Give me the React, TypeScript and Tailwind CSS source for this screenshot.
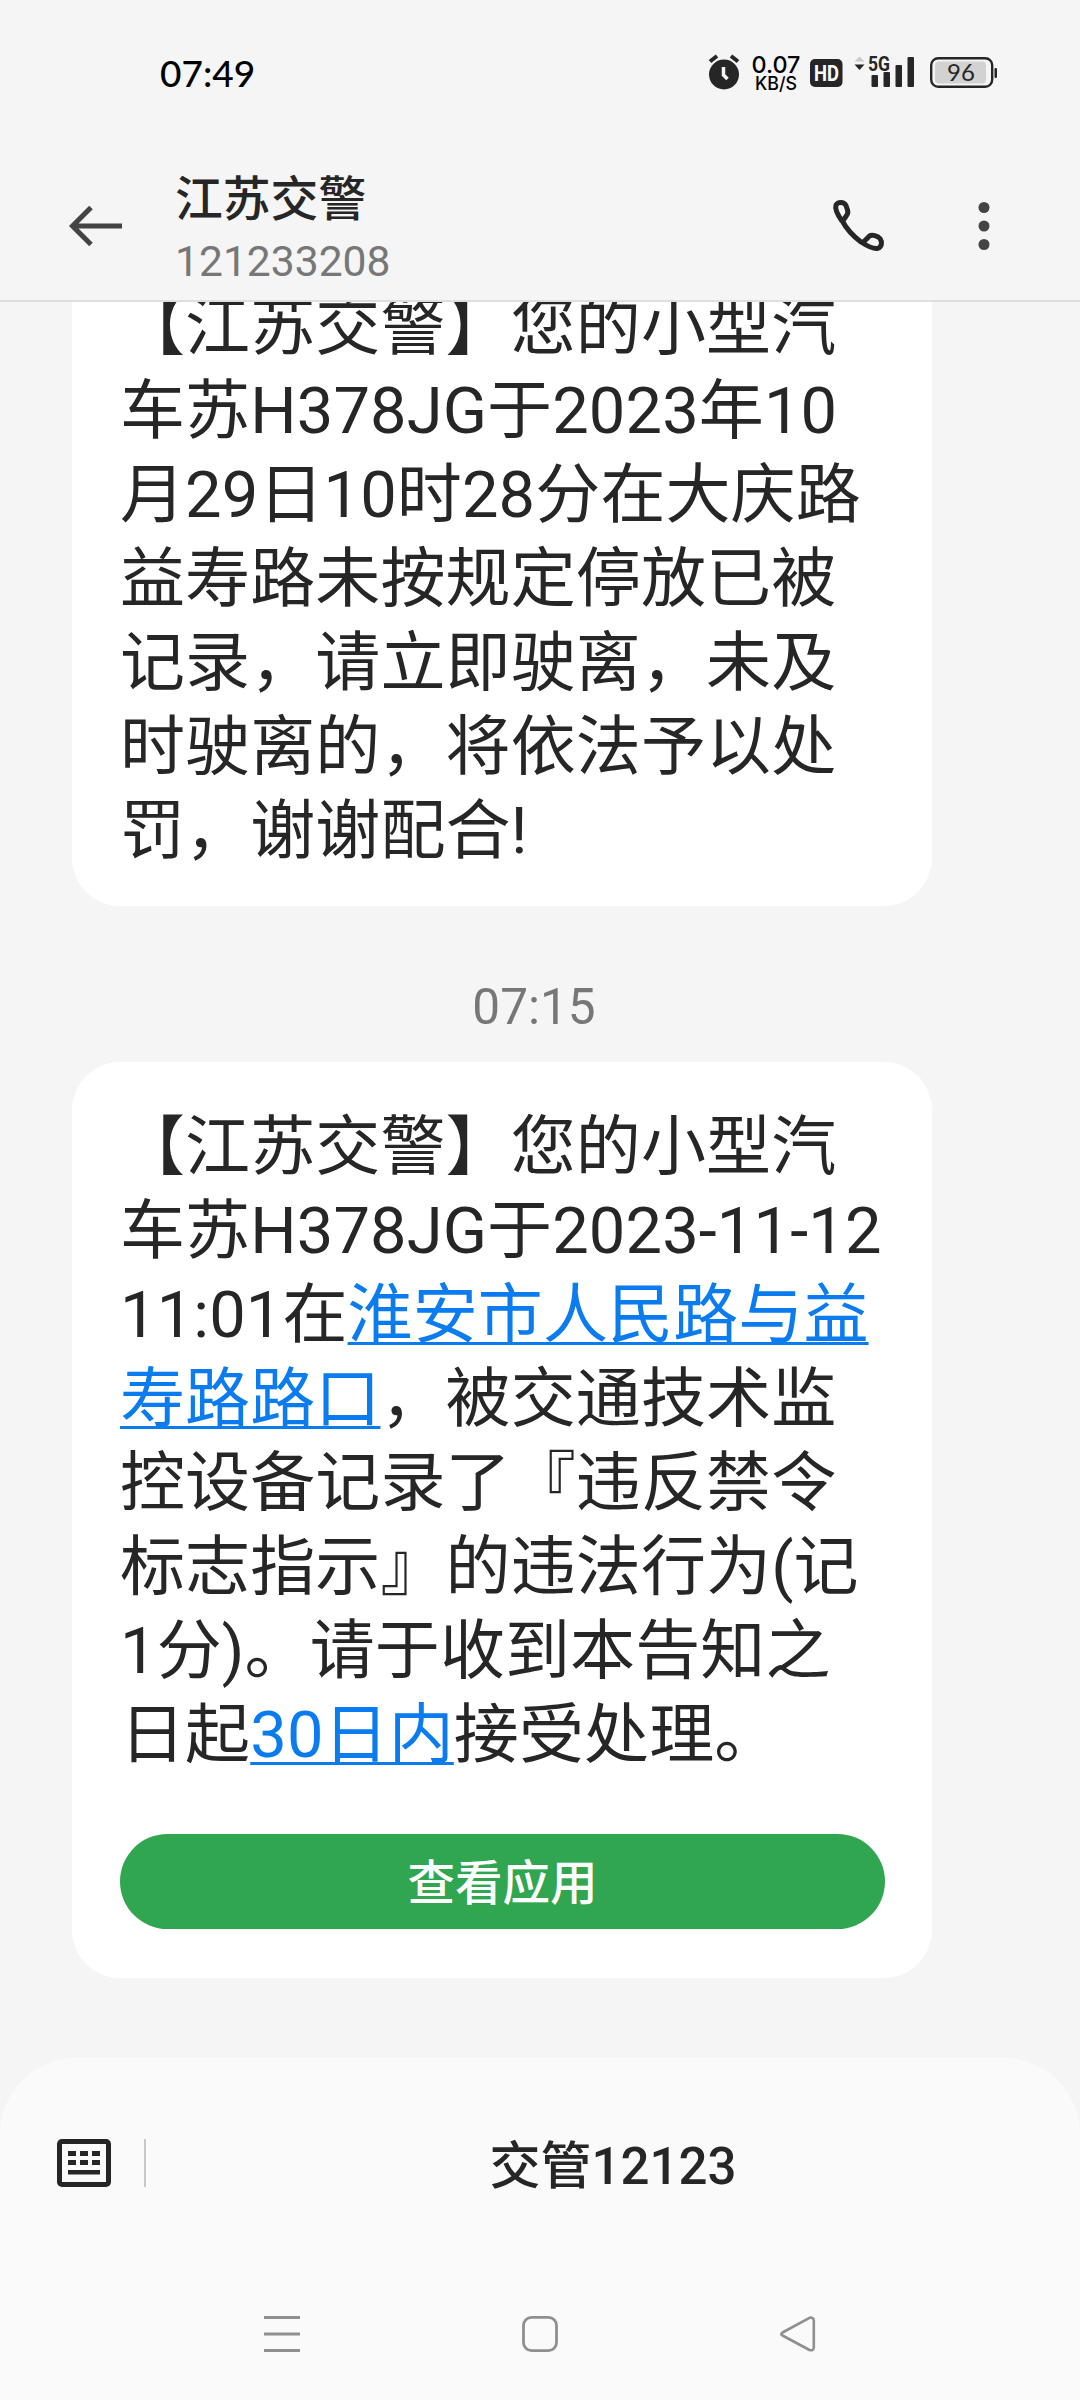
import type { ReactNode } from "react";

interface Message {
  id: string;
  time: string | null;
  lines: ReactNode[];
  action?: string;
}

function Link({ children }: { children: ReactNode }) {
  return (
    <span className="text-[#0a7cf0] underline decoration-[3px] underline-offset-[5px] [text-decoration-skip-ink:none]">
      {children}
    </span>
  );
}

const messages: Message[] = [
  {
    id: "parking",
    time: null,
    lines: [
      "【江苏交警】您的小型汽",
      "车苏H378JG于2023年10",
      "月29日10时28分在大庆路",
      "益寿路未按规定停放已被",
      "记录，请立即驶离，未及",
      "时驶离的，将依法予以处",
      "罚，谢谢配合!",
    ],
  },
  {
    id: "violation",
    time: "07:15",
    lines: [
      "【江苏交警】您的小型汽",
      "车苏H378JG于2023-11-12",
      <>
        11:01在<Link>淮安市人民路与益</Link>
      </>,
      <>
        <Link>寿路路口</Link>，被交通技术监
      </>,
      "控设备记录了『违反禁令",
      "标志指示』的违法行为(记",
      "1分)。请于收到本告知之",
      <>
        日起<Link>30日内</Link>接受处理。
      </>,
    ],
    action: "查看应用",
  },
];

function StatusIcons() {
  return (
    <svg width="300" height="50" viewBox="700 48 300 50" fill="#262626">
      {/* Alarm */}
      <circle cx="724" cy="74.500" r="15" />
      <path d="M710 61.500l7-5.500M738 61.500l-7-5.500" stroke="#262626" strokeWidth="4" />
      <path d="M723.500 67v8l4 4" fill="none" stroke="#f5f5f5" strokeWidth="3.500" />
      {/* Network speed */}
      <text x="776" y="73" textAnchor="middle" fontFamily="Inter, sans-serif" fontSize="23.500" fontWeight="500" fill="#000" textLength="49" lengthAdjust="spacingAndGlyphs">0.07</text>
      <text x="776" y="90" textAnchor="middle" fontFamily="Inter, sans-serif" fontSize="18" fontWeight="500" fill="#000" textLength="42" lengthAdjust="spacingAndGlyphs">KB/S</text>
      {/* HD badge */}
      <rect x="810" y="59" width="32.500" height="28" rx="5" />
      <text x="826.500" y="81" textAnchor="middle" fontFamily="Roboto, sans-serif" fontSize="22" fontWeight="700" fill="#fff" textLength="25" lengthAdjust="spacingAndGlyphs">HD</text>
      {/* Signal */}
      <path d="M854.500 61.500l5-5 5 5z" fill="#c9c9c9" />
      <path d="M854.500 64.500l5 5.500 5-5.500z" />
      <text x="879" y="70.500" textAnchor="middle" fontFamily="Roboto, sans-serif" fontSize="20.500" fontWeight="700" textLength="22" lengthAdjust="spacingAndGlyphs">5G</text>
      <rect x="871.500" y="75" width="6.500" height="12" rx="1" />
      <rect x="883.500" y="72" width="6.500" height="15" rx="1" />
      <rect x="895.500" y="65" width="6.500" height="22" rx="1" />
      <rect x="907.500" y="57" width="6.500" height="30" rx="1" />
      {/* Battery */}
      <rect x="931.200" y="58.200" width="61" height="28.600" rx="7" fill="none" stroke="#262626" strokeWidth="2.400" />
      <rect x="935" y="61.500" width="51" height="22" rx="4" fill="#d2d2d2" />
      <rect x="994.500" y="68" width="2.500" height="10" rx="1" />
      <text x="961" y="81" textAnchor="middle" fontFamily="Lato, sans-serif" fontSize="24" fontWeight="400">96</text>
    </svg>
  );
}

function StatusBar() {
  return (
    <div className="flex h-[145px] items-center justify-between pl-40 pr-20">
      <span className="font-[Lato,sans-serif] text-[37px] font-medium leading-none text-black">07:49</span>
      <StatusIcons />
    </div>
  );
}

function Header() {
  return (
    <header className="h-[302px] shrink-0 border-b-2 border-[#dedede] bg-[#f5f5f5]">
      <StatusBar />
      <div className="flex pl-[68px] pr-[89px]">
        <svg className="mt-[55px]" width="54" height="52" viewBox="0 0 54 52" fill="none" stroke="#444" strokeWidth="5">
          <path d="M54 26H5M23 7.500L4.500 26L23 44.500" />
        </svg>
        <div className="ml-[53px] flex flex-1 flex-col">
          <h1 className="mt-[23px] text-[47.800px] font-medium leading-[64px]">江苏交警</h1>
          <p className="-mt-[3px] text-[42.600px] leading-[64px] text-[#777]">121233208</p>
        </div>
        <svg className="mt-[53px]" width="56" height="56" viewBox="831 198 56 56" fill="none" stroke="#262626" strokeWidth="5" strokeLinejoin="round">
          <path d="M842 221C837 214 835 208 836 205C838 201.500 844 201.500 846 205.500L847.500 210C849 214 846 216 843 220.500" />
          <path d="M842 220.500C846 228 853 236 861 242C868 246.500 874 249 877.500 248.500C882 247 882.500 242 880 238.500C878 236 872 234 869.500 236L863 242.500" />
        </svg>
        <svg className="ml-[90px] mt-[53px]" width="14" height="56" viewBox="977 198 14 56" fill="#444">
          <circle cx="984" cy="207.500" r="5.500" />
          <circle cx="984" cy="226" r="5.500" />
          <circle cx="984" cy="244.500" r="5.500" />
        </svg>
      </div>
    </header>
  );
}

function MessageCard({ message }: { message: Message }) {
  return (
    <>
      {message.time && (
        <time className="mt-[69px] mb-[23px] w-[1068px] text-center text-[49.500px] leading-[64px] text-[#777]">
          {message.time}
        </time>
      )}
      <article
        className={`ml-[72px] w-[860px] rounded-[48px] bg-white pl-12 ${
          message.action ? "pb-[49px] pt-[43px]" : "pb-[33px] pt-[43px]"
        }`}
      >
        {message.lines.map((line, i) => (
          <p key={i} className="whitespace-nowrap text-[65px] leading-[84px] tracking-[0.12px]">
            {line}
          </p>
        ))}
        {message.action && (
          <button className="mt-[57px] flex h-[95px] w-[765px] items-center justify-center rounded-full bg-[#30a650] pt-[7px] text-[47.500px] font-medium text-white">
            {message.action}
          </button>
        )}
      </article>
    </>
  );
}

function BottomPanel() {
  return (
    <footer className="h-[342px] shrink-0 rounded-t-[76px] bg-[#fafafa]">
      <div className="flex h-[210px] items-center pl-14">
        <svg width="56" height="50" viewBox="0 0 56 50" fill="#262626">
          <rect x="3.500" y="3.500" width="49" height="43" rx="2.500" fill="none" stroke="#262626" strokeWidth="5" />
          <path d="M12 13h8v5h-8zM24 13h8v5h-8zM36 13h8v5h-8zM12 22h8v5h-8zM24 22h8v5h-8zM36 22h8v5h-8zM12 32h32v4.500H12z" />
        </svg>
        <div className="ml-8 h-12 w-0.5 bg-[#c8c8c8]" />
        <span className="flex-1 pt-2 text-center text-[51px] font-medium leading-[64px]">交管12123</span>
      </div>
      {/* Navigation keys */}
      <nav className="flex justify-between pl-[262px] pr-[262px] pt-[46px]">
        <svg width="40" height="40" viewBox="0 0 40 40" stroke="#8f8f8f" strokeWidth="3">
          <path d="M2 3.500h36M2 20h36M2 36.500h36" />
        </svg>
        <svg width="40" height="40" viewBox="0 0 40 40" fill="none" stroke="#8f8f8f" strokeWidth="2.800">
          <rect x="3.500" y="3.400" width="33" height="33.200" rx="8" />
        </svg>
        <svg width="40" height="40" viewBox="0 0 40 40" fill="none" stroke="#8f8f8f" strokeWidth="2.600" strokeLinejoin="round">
          <path d="M31.500 3.800L4.500 18.500Q2 20 4.500 21.500L31.500 36Q35.500 37 35.800 33.500V6.500Q35.500 3 31.500 3.800z" />
        </svg>
      </nav>
    </footer>
  );
}

export default function App() {
  return (
    <div
      lang="zh-CN"
      className="flex h-[2400px] w-[1080px] flex-col overflow-hidden bg-[#f5f5f5] font-[Roboto,'Noto_Sans_CJK_SC',sans-serif] text-[#262626]"
    >
      <Header />
      <main className="flex min-h-0 flex-1 flex-col justify-end overflow-hidden pb-20">
        {messages.map((message) => (
          <MessageCard key={message.id} message={message} />
        ))}
      </main>
      <BottomPanel />
    </div>
  );
}
